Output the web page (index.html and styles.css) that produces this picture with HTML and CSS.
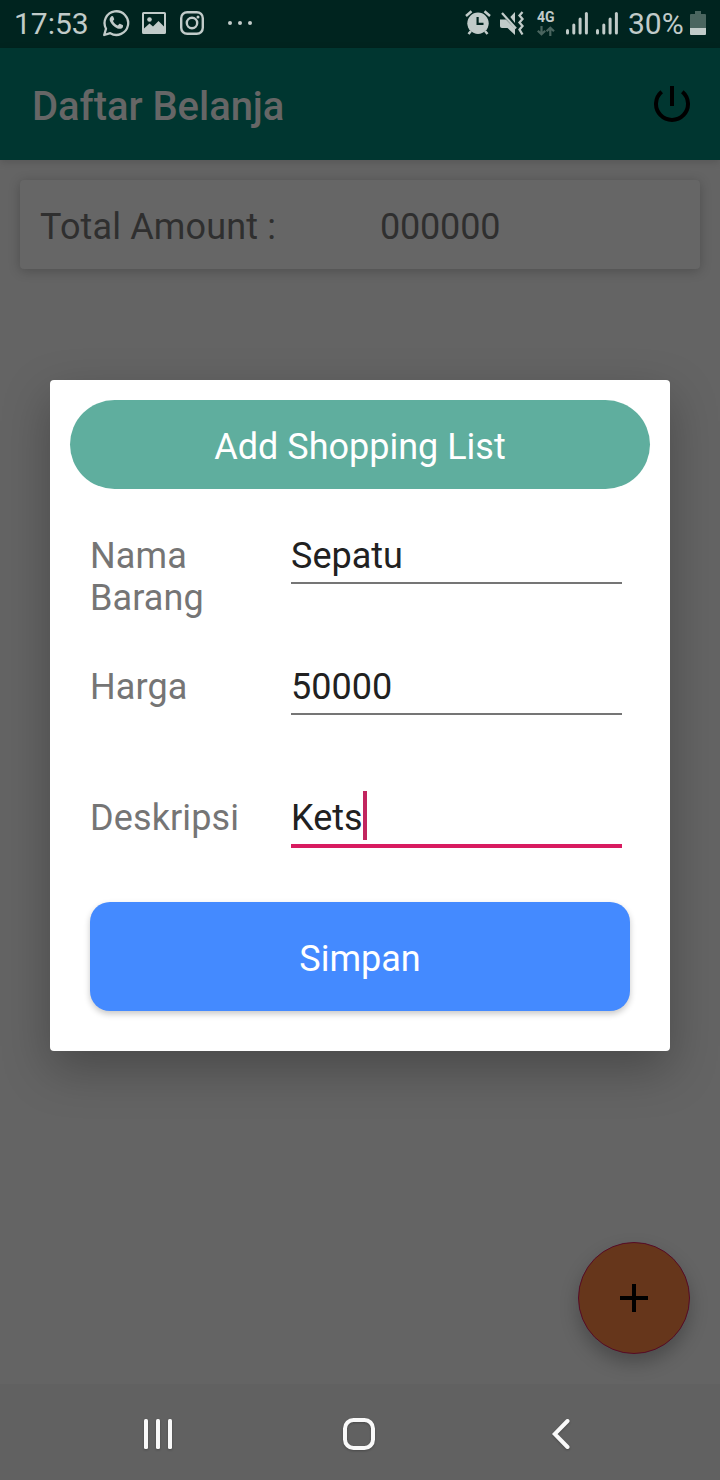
FILE: index.html
```html
<!DOCTYPE html>
<html lang="id">
<head>
<meta charset="utf-8">
<title>Daftar Belanja</title>
<link rel="stylesheet" href="styles.css">
</head>
<body>
<div class="screen">
  <header class="status">
    <span class="time">17:53</span>
    <svg class="ic-chat" width="28" height="28" viewBox="0 0 28 28" fill="none" stroke="currentColor" stroke-width="2.3"><path d="M2.2 26 L4 19.7 A11.8 11.8 0 1 1 8.3 24.2 Z" stroke-linejoin="round"/><path d="M9.2 7.4 C10 6.7 10.9 6.8 11.3 7.7 L12.2 10 C12.4 10.7 11.4 11.5 11 12 C12 14 13.6 15.7 15.8 16.6 L17.2 15 C17.6 14.6 18 14.7 18.4 14.9 L20.6 16 C21.3 16.3 21.1 17.5 20.8 18.2 C19.8 20.1 17.5 20.2 15.5 19.4 C11.8 18.1 9.2 15 8 12.3 C7.2 10.3 7.8 8.5 9.2 7.4 Z" fill="currentColor" stroke="none"/></svg>
    <svg class="ic-image" width="24" height="22" viewBox="0 0 24 22"><path fill="currentColor" fill-rule="evenodd" d="M1.5 0h21A1.5 1.5 0 0 1 24 1.5v19a1.5 1.5 0 0 1-1.5 1.5h-21A1.5 1.5 0 0 1 0 20.500v-19A1.500 1.500 0 0 1 1.500 0ZM2 2v14.500l5.500-5 3.500 3 5.500-5.500 5.500 5.500V2Z"/><circle cx="7.500" cy="7.500" r="2.300" fill="currentColor"/></svg>
    <svg class="ic-camera" width="24" height="24" viewBox="0 0 24 24" fill="none" stroke="currentColor" stroke-width="2.4"><rect x="1.200" y="1.200" width="21.600" height="21.600" rx="6"/><circle cx="12" cy="12" r="5.200"/><circle cx="18" cy="6" r="1.500" fill="currentColor" stroke="none"/></svg>
    <svg class="ic-more" width="26" height="6" viewBox="0 0 26 6" fill="currentColor"><circle cx="3" cy="3" r="2"/><circle cx="13" cy="3" r="2"/><circle cx="23" cy="3" r="2"/></svg>
    <div class="status-right">
      <svg class="ic-alarm" width="26" height="26" viewBox="0 0 26 26"><path d="M1 6 L6.500 1.300 M25 6 L19.500 1.300 M6 21 L3.500 24 M20 21 L22.500 24" stroke="currentColor" stroke-width="2.500"/><circle cx="13" cy="13.300" r="10.700" fill="currentColor"/><path d="M12.600 7 V13.800 H18.500" fill="none" stroke="#00241f" stroke-width="2.200"/></svg>
      <svg class="ic-mute" width="25" height="25" viewBox="0 0 25 25" fill="currentColor"><path d="M0 8.500 H6 L15 17.500 V24 L7.500 17 H2 C.8 17 0 16.200 0 15 Z"/><path d="M15 1 V12 L10.300 6 Z"/><path d="M2 2 L16 17.500 M22.500 1 L19.500 4.500 L22.500 8 L19.500 11.500 L22.500 15 L19.500 18.500 L22.500 23.500" fill="none" stroke="currentColor" stroke-width="2.300"/></svg>
      <div class="net"><span>4G</span><svg width="18" height="10" viewBox="0 0 18 10" fill="none" stroke="currentColor" stroke-width="2.200"><path d="M4.500 0V8M.8 4.700 4.500 8.300 8.200 4.700M13.300 10V2M9.600 5.300 13.300 1.700 17 5.300"/></svg></div>
      <svg class="ic-signal" width="22" height="23" viewBox="0 0 22 23" fill="currentColor"><rect y="17" width="3" height="5.500" rx="1.500"/><rect x="6.300" y="11.500" width="3" height="11" rx="1.500"/><rect x="12.600" y="5.500" width="3" height="17" rx="1.500"/><rect x="18.900" y="0" width="3" height="22.500" rx="1.500"/></svg>
      <svg class="ic-signal" width="22" height="23" viewBox="0 0 22 23" fill="currentColor"><rect y="17" width="3" height="5.500" rx="1.500"/><rect x="6.300" y="11.500" width="3" height="11" rx="1.500"/><rect x="12.600" y="5.500" width="3" height="17" rx="1.500"/><rect x="18.900" y="0" width="3" height="22.500" rx="1.500"/></svg>
      <span class="percent">30%</span>
      <svg class="ic-battery" width="16" height="24" viewBox="0 0 16 24"><path d="M5 0h6v3h4a1 1 0 0 1 1 1v13H0V4a1 1 0 0 1 1-1h4Z" fill="#4a655f"/><path d="M0 17h16v6a1 1 0 0 1-1 1H1a1 1 0 0 1-1-1Z" fill="#c1cbc9"/></svg>
    </div>
  </header>
  <div class="appbar">
    <h1 class="title">Daftar Belanja</h1>
    <svg class="ic-power" width="36" height="36" viewBox="0 0 36 36" fill="none" stroke="#000" stroke-width="4"><path d="M18 0V20M7.700 5.700A16 16 0 1 0 28.300 5.700"/></svg>
  </div>
  <main class="content">
    <section class="total"><span>Total Amount :</span><span class="amount">000000</span></section>
    <section class="dialog">
      <h2 class="dialog-title">Add Shopping List</h2>
      <form class="form">
        <div class="row"><label class="label">Nama Barang</label><div class="field">Sepatu</div></div>
        <div class="row"><label class="label">Harga</label><div class="field">50000</div></div>
        <div class="row"><label class="label">Deskripsi</label><div class="field active">Kets<i class="caret"></i></div></div>
        <button class="save" type="button">Simpan</button>
      </form>
    </section>
    <div class="fab"><svg width="28" height="28" viewBox="0 0 28 28" stroke="#000" stroke-width="4"><path d="M14 0V28M0 14H28"/></svg></div>
  </main>
  <nav class="navbar">
    <svg class="nav-recent" width="28" height="30" viewBox="0 0 28 30" fill="#f9f9f9"><rect width="4" height="30" rx="1.500"/><rect x="12" width="4" height="30" rx="1.500"/><rect x="24" width="4" height="30" rx="1.500"/></svg>
    <svg class="nav-home" width="32" height="32" viewBox="0 0 32 32"><rect x="2" y="2" width="28" height="28" rx="8.500" fill="none" stroke="#f9f9f9" stroke-width="4"/></svg>
    <svg class="nav-back" width="18" height="30" viewBox="0 0 18 30"><path d="M15.500 2 L2.700 15 L15.500 28" fill="none" stroke="#f9f9f9" stroke-width="4" stroke-linecap="round"/></svg>
  </nav>
</div>
</body>
</html>
```
FILE: styles.css
```css
* { box-sizing: border-box; }
body { margin: 0; font-family: Roboto, "Noto Sans", sans-serif; font-size: 36px; line-height: 42px; }
svg { display: block; flex: none; }
h1, h2 { margin: 0; font: inherit; }
.screen { width: 720px; height: 1480px; display: flex; flex-direction: column; background: #646464; overflow: hidden; }

.status { height: 48px; flex: none; display: flex; align-items: flex-start; padding-left: 14px; background: #00241f; color: #c1cbc9; }
.time { width: 88px; font-size: 30px; line-height: 36px; padding-top: 6px; }
.ic-chat { margin-top: 9px; }
.ic-image { margin: 12px 0 0 12px; }
.ic-camera { margin: 11px 0 0 14px; }
.ic-more { margin: 20px 0 0 23px; }
.status-right { margin-left: auto; padding-right: 14px; display: flex; align-items: flex-start; }
.ic-alarm { margin: 10px 9px 0 0; }
.ic-mute { margin: 11px 12px 0 0; }
.net { width: 19px; margin: 10px 10px 0 0; font-size: 14px; line-height: 15px; font-weight: 700; }
.net span { display: block; }
.net svg { margin-top: 1px; color: #4a655f; }
.ic-signal { margin: 12px 8px 0 0; }
.percent { width: 64px; padding: 6px 0 0 2px; font-size: 30px; line-height: 36px; }
.ic-battery { margin-top: 11px; }

.appbar { height: 112px; flex: none; display: flex; align-items: flex-start; justify-content: space-between; padding: 35px 30px 0 32px; background: #003630; box-shadow: 0 2px 8px rgba(0, 0, 0, .14); }
.title { font-size: 40px; line-height: 47px; font-weight: 500; color: #666; letter-spacing: -.05px; }
.ic-power { margin-top: 3px; }

.content { flex: 1; display: flex; flex-direction: column; padding: 20px 20px 0; }
.total { height: 89px; flex: none; display: grid; grid-template-columns: 340px 1fr; padding: 26px 20px 0; border-radius: 4px; background: #666; color: #2f2f2f; box-shadow: 0 2px 12px rgba(0, 0, 0, .22); letter-spacing: .15px; }
.amount { letter-spacing: -.2px; }
.dialog { height: 671px; flex: none; margin: 111px 30px 0; padding: 20px; border-radius: 4px; background: #fff; box-shadow: 0 18px 48px rgba(0, 0, 0, .27); }
.dialog-title { height: 89px; padding-top: 26px; border-radius: 45px; background: #5fae9e; color: #fff; text-align: center; }
.form { padding: 46px 20px 0; }
.row { height: 131px; display: grid; grid-template-columns: 130px 331px; column-gap: 71px; align-items: start; }
.row:nth-child(3) { height: 105px; }
.label { color: #757575; letter-spacing: .12px; }
.field { height: 49px; display: flex; color: #212121; border-bottom: 2px solid #757575; }
.active { height: 51px; border-bottom: 4px solid #d81b60; }
.caret { width: 4px; height: 49px; margin-top: -6px; background: #c2255f; }
.save { display: block; width: 540px; height: 109px; padding: 4px 0 0; border: 0; border-radius: 20px; background: #448aff; color: #fff; font: inherit; text-align: center; box-shadow: 0 3px 6px rgba(0, 0, 0, .22); }

.fab { width: 112px; height: 112px; align-self: flex-end; margin: auto 10px 30px 0; display: flex; align-items: center; justify-content: center; border: 1px solid #560b26; border-radius: 50%; background: #66361b; box-shadow: 0 9px 18px rgba(0, 0, 0, .25); }

.navbar { height: 96px; flex: none; display: flex; align-items: center; padding: 4px 0 0 144px; background: #616161; }
.navbar svg { filter: drop-shadow(0 1px 1px rgba(0, 0, 0, .25)); }
.nav-home { margin-left: 171px; }
.nav-back { margin-left: 177px; }
```
